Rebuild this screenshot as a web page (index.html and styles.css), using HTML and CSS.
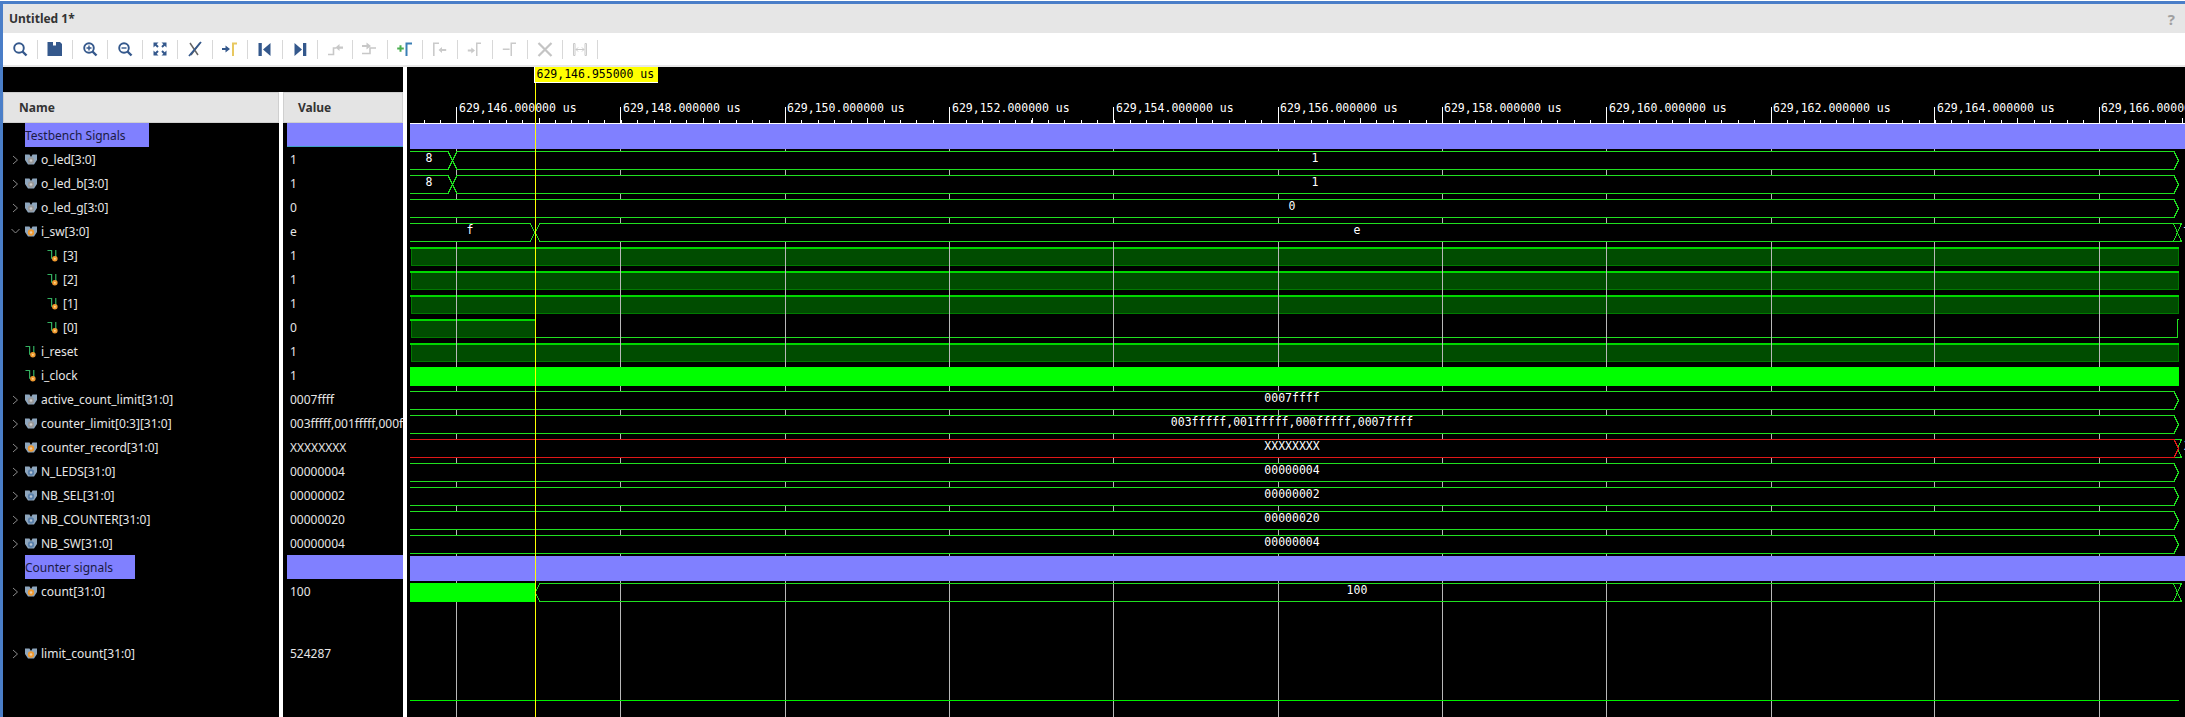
FILE: index.html
```html
<!DOCTYPE html>
<html lang="en">
<head>
    <meta charset="UTF-8">
    <title>Untitled 1*</title>
    <link rel="stylesheet" href="styles.css">
</head>
<body>
<svg class="defs">
    <symbol id="bus-icon" viewBox="0 0 12 12">
        <path d="M0 .5h4.5l1.5 2.5 1.5-2.5H12v5.5l-3 4.5H3L0 6z" fill="#8ea6bd"/>
        <circle cx="6" cy="6.5" r="3.2" fill="currentColor"/>
        <circle cx="6" cy="6.5" r="1.3" fill="#e4e4e4" opacity=".7"/>
    </symbol>
    <symbol id="bit-icon" viewBox="0 0 12 13">
        <path d="M0 .5h4.500v9M9 0v8" fill="none" stroke="#33b060" stroke-width="1.300"/>
        <circle cx="8" cy="9.500" r="3" fill="#f09a30"/>
        <circle cx="8" cy="9.500" r="1" fill="#ffd890"/>
    </symbol>
    <symbol id="right" viewBox="0 0 7 10">
        <path d="M1 1l4.500 4-4.500 4" fill="none" stroke="#8a8a8a"/>
    </symbol>
    <symbol id="down" viewBox="0 0 9 7">
        <path d="M.5 1l4 4 4-4" fill="none" stroke="#8a8a8a"/>
    </symbol>
</svg>

<div class="window">
    <div class="titlebar">
        <span class="title">Untitled 1*</span>
        <span class="help">?</span>
    </div>

    <div class="toolbar">
        <span class="tool"><svg viewBox="0 0 18 18"><circle cx="8" cy="8" r="4.800" fill="none" stroke="#34588c" stroke-width="1.900"/><path d="M11.500 11.500l4 4" stroke="#34588c" stroke-width="2.400"/></svg></span>
        <span class="tool"><svg viewBox="0 0 18 18"><path d="M1.500 2H7V5.500H10V2H14L16 4V16H1.500Z" fill="#34588c"/></svg></span>
        <span class="tool"><svg viewBox="0 0 18 18"><circle cx="8" cy="8" r="4.800" fill="none" stroke="#34588c" stroke-width="1.900"/><path d="M11.500 11.500l4 4" stroke="#34588c" stroke-width="2.400"/><path d="M5.500 8h5M8 5.500v5" stroke="#34588c" stroke-width="1.400"/></svg></span>
        <span class="tool"><svg viewBox="0 0 18 18"><circle cx="8" cy="8" r="4.800" fill="none" stroke="#34588c" stroke-width="1.900"/><path d="M11.500 11.500l4 4" stroke="#34588c" stroke-width="2.400"/><path d="M5.500 8h5" stroke="#34588c" stroke-width="1.400"/></svg></span>
        <span class="tool"><svg viewBox="0 0 18 18" fill="#34588c"><path id="fit-arrow" d="M2.500 2.500h5L5.700 4.300l2 2-1.400 1.400-2-2-1.800 1.800z"/><use href="#fit-arrow" transform="rotate(90 9 9)"/><use href="#fit-arrow" transform="rotate(180 9 9)"/><use href="#fit-arrow" transform="rotate(270 9 9)"/></svg></span>
        <span class="tool"><svg viewBox="0 0 18 18"><path d="M4 3l8 12M5 15L14 3" stroke="#666" stroke-width="1.500"/><path d="M3 16L15 2" stroke="#34588c" stroke-width="1.800"/></svg></span>
        <span class="tool"><svg viewBox="0 0 18 18"><path d="M1 8h3.500V5.500L9 9l-4.500 3.500V10H1z" fill="#34588c"/><path d="M11 2.500H16V4.500H13V16H11Z" fill="#e8c860"/></svg></span>
        <span class="tool"><svg viewBox="0 0 18 18" fill="#34588c"><path d="M2.500 3H5.800V16H2.500ZM14.500 3V16L7 9.500Z"/></svg></span>
        <span class="tool"><svg viewBox="0 0 18 18" fill="#34588c"><path d="M3.500 3V16L11 9.500ZM12 3H15.300V16H12Z"/></svg></span>
        <span class="tool"><svg viewBox="0 0 18 18"><path d="M2 14.500h5.500V8h3" fill="none" stroke="#c8c8c8" stroke-width="1.600"/><path d="M9.500 7.500l4-3.500v2.500H17v2.200h-3.500V11z" fill="#c8c8c8"/></svg></span>
        <span class="tool"><svg viewBox="0 0 18 18"><path d="M1 13.500h8V8h6" fill="none" stroke="#c8c8c8" stroke-width="1.600"/><path d="M1 5h4.500V2.500L10 6l-4.500 3.500V7H1z" fill="#c8c8c8"/></svg></span>
        <span class="tool"><svg viewBox="0 0 18 18"><path d="M1.200 8.500h6.600M4.500 5.200v6.600" stroke="#4caf50" stroke-width="2"/><path d="M9.500 2.500H16V4.500H11.500V16H9.500Z" fill="#3a7fb5"/></svg></span>
        <span class="tool"><svg viewBox="0 0 18 18" fill="#cacaca"><path d="M2 2.500H8V4H3.600V16H2Z"/><path d="M7.500 10l3.500-3v2h4.200v2H11v2z"/></svg></span>
        <span class="tool"><svg viewBox="0 0 18 18" fill="#cacaca"><path d="M1.800 9.500h3.500v-2L9 10.500l-3.700 3v-2H1.800zM10 2.500H15V4H11.500V16H10Z"/></svg></span>
        <span class="tool"><svg viewBox="0 0 18 18" fill="#cacaca"><path d="M1.800 8.500h6.800v1.600H1.800zM9.500 2.500H15V4H11V16H9.500Z"/></svg></span>
        <span class="tool"><svg viewBox="0 0 18 18"><path d="M2.500 3l13 13M15.500 3l-13 13" stroke="#c4c4c4" stroke-width="2.200"/></svg></span>
        <span class="tool"><svg viewBox="0 0 18 18" fill="none" stroke="#cacaca"><path d="M2.500 3.500h1.500v12H2.500zM14 3.500h1.500v12H14zM5 9.500h8M5 9.500l2-2M5 9.500l2 2M13 9.500l-2-2M13 9.500l-2 2"/></svg></span>
    </div>
    <div class="toolbar-edge"></div>

    <div class="viewer">
        <div class="signals">
            <div class="signals-top"></div>
            <div class="columns">
                <div class="col col-name">
                    <div class="col-head">Name</div>
                    <div class="row lvl1"><span class="group-label group-tb">Testbench Signals</span></div>
                    <div class="row"><svg class="arrow"><use href="#right"/></svg><svg class="sig out"><use href="#bus-icon"/></svg>o_led[3:0]</div>
                    <div class="row"><svg class="arrow"><use href="#right"/></svg><svg class="sig out"><use href="#bus-icon"/></svg>o_led_b[3:0]</div>
                    <div class="row"><svg class="arrow"><use href="#right"/></svg><svg class="sig out"><use href="#bus-icon"/></svg>o_led_g[3:0]</div>
                    <div class="row"><svg class="arrow open"><use href="#down"/></svg><svg class="sig in"><use href="#bus-icon"/></svg>i_sw[3:0]</div>
                    <div class="row lvl2"><svg class="sig"><use href="#bit-icon"/></svg>[3]</div>
                    <div class="row lvl2"><svg class="sig"><use href="#bit-icon"/></svg>[2]</div>
                    <div class="row lvl2"><svg class="sig"><use href="#bit-icon"/></svg>[1]</div>
                    <div class="row lvl2"><svg class="sig"><use href="#bit-icon"/></svg>[0]</div>
                    <div class="row lvl1"><svg class="sig"><use href="#bit-icon"/></svg>i_reset</div>
                    <div class="row lvl1"><svg class="sig"><use href="#bit-icon"/></svg>i_clock</div>
                    <div class="row"><svg class="arrow"><use href="#right"/></svg><svg class="sig out"><use href="#bus-icon"/></svg>active_count_limit[31:0]</div>
                    <div class="row"><svg class="arrow"><use href="#right"/></svg><svg class="sig out"><use href="#bus-icon"/></svg>counter_limit[0:3][31:0]</div>
                    <div class="row"><svg class="arrow"><use href="#right"/></svg><svg class="sig in"><use href="#bus-icon"/></svg>counter_record[31:0]</div>
                    <div class="row"><svg class="arrow"><use href="#right"/></svg><svg class="sig const"><use href="#bus-icon"/></svg>N_LEDS[31:0]</div>
                    <div class="row"><svg class="arrow"><use href="#right"/></svg><svg class="sig const"><use href="#bus-icon"/></svg>NB_SEL[31:0]</div>
                    <div class="row"><svg class="arrow"><use href="#right"/></svg><svg class="sig const"><use href="#bus-icon"/></svg>NB_COUNTER[31:0]</div>
                    <div class="row"><svg class="arrow"><use href="#right"/></svg><svg class="sig const"><use href="#bus-icon"/></svg>NB_SW[31:0]</div>
                    <div class="row lvl1"><span class="group-label group-cnt">Counter signals</span></div>
                    <div class="row"><svg class="arrow"><use href="#right"/></svg><svg class="sig in"><use href="#bus-icon"/></svg>count[31:0]</div>
                    <div class="row row-tall"><svg class="arrow"><use href="#right"/></svg><svg class="sig in"><use href="#bus-icon"/></svg>limit_count[31:0]</div>
                </div>
                <div class="col col-value">
                    <div class="col-head">Value</div>
                    <div class="row val-group val-selected"></div>
                    <div class="row">1</div>
                    <div class="row">1</div>
                    <div class="row">0</div>
                    <div class="row">e</div>
                    <div class="row">1</div>
                    <div class="row">1</div>
                    <div class="row">1</div>
                    <div class="row">0</div>
                    <div class="row">1</div>
                    <div class="row">1</div>
                    <div class="row">0007ffff</div>
                    <div class="row">003fffff,001fffff,000fffff,0007ffff</div>
                    <div class="row">XXXXXXXX</div>
                    <div class="row">00000004</div>
                    <div class="row">00000002</div>
                    <div class="row">00000020</div>
                    <div class="row">00000004</div>
                    <div class="row val-group"></div>
                    <div class="row">100</div>
                    <div class="row row-tall">524287</div>
                </div>
            </div>
        </div>

        <div class="pane-gutter"></div>

        <!-- coordinates in this svg are page pixels -->
        <svg class="wave" viewBox="407 67 1778 650">
            <defs>
                <path id="bus" d="M410 .5H2174L2178.500 9.500L2174 18.500H410"/>
                <path id="bus-cross" d="M410 .5H448L457 18.500H2174L2178.500 9.500L2174 .5H457L448 18.500H410"/>
                <path id="hourglass" d="M2173.500 .5H2181.500L2173.500 18.500H2181.500Z"/>
                <g id="high">
                    <rect class="high-fill" x="411" y="1" width="1767" height="17"/>
                    <rect class="high-top" x="410" y="0" width="1769" height="2"/>
                </g>
            </defs>

            <!-- single bit rows sit under the grid -->
            <use href="#high" y="247"/>
            <use href="#high" y="271"/>
            <use href="#high" y="295"/>
            <use href="#high" y="343"/>
            <rect class="high-fill" x="411" y="320" width="124" height="17"/>
            <rect class="high-top" x="410" y="319" width="125" height="2"/>
            <path class="line" d="M535 337.500H2177.500V319.500H2179"/>

            <path class="grid" d="M456.500 123V717M620.500 123V717M785.500 123V717M949.500 123V717M1113.500 123V717M1278.500 123V717M1442.500 123V717M1606.500 123V717M1771.500 123V717M1934.500 123V717M2099.500 123V717"/>

            <rect class="group" x="410" y="124" width="1775" height="25"/>
            <rect class="group" x="410" y="556" width="1775" height="25"/>
            <rect class="clock" x="410" y="367" width="1769" height="19"/>

            <use class="sig-bus" href="#bus-cross" y="151"/>
            <use class="sig-bus" href="#bus-cross" y="175"/>
            <use class="sig-bus" href="#bus" y="199"/>
            <rect class="mask" x="410" y="223" width="1772" height="19"/>
            <path class="line" d="M410 223.500H530L540 241.500H2174M410 241.500H530L540 223.500H2174"/>
            <use class="line" href="#hourglass" y="223"/>
            <use class="sig-bus" href="#bus" y="391"/>
            <use class="sig-bus" href="#bus" y="415"/>
            <rect class="mask" x="410" y="439" width="1772" height="19"/>
            <use class="line" href="#hourglass" y="439"/>
            <use class="sig-bus sig-x" href="#bus" y="439"/>
            <use class="sig-bus" href="#bus" y="463"/>
            <use class="sig-bus" href="#bus" y="487"/>
            <use class="sig-bus" href="#bus" y="511"/>
            <use class="sig-bus" href="#bus" y="535"/>
            <rect class="clock" x="410" y="583" width="125" height="19"/>
            <path class="line" d="M540 583.500L535 592.500L540 601.500H2174M540 583.500H2174"/>
            <use class="line" href="#hourglass" y="583"/>
            <path class="low" d="M410 700.500H2179"/>

            <text class="mid" x="429" y="162">8</text>
            <text class="mid" x="1315" y="162">1</text>
            <text class="mid" x="429" y="186">8</text>
            <text class="mid" x="1315" y="186">1</text>
            <text class="mid" x="1292" y="210">0</text>
            <text class="mid" x="470" y="234">f</text>
            <text class="mid" x="1357" y="234">e</text>
            <text x="2183" y="234">f</text>
            <text class="mid" x="1292" y="402">0007ffff</text>
            <text class="mid" x="1292" y="426">003fffff,001fffff,000fffff,0007ffff</text>
            <text class="mid" x="1292" y="450">XXXXXXXX</text>
            <text x="2184" y="450">X</text>
            <text class="mid" x="1292" y="474">00000004</text>
            <text class="mid" x="1292" y="498">00000002</text>
            <text class="mid" x="1292" y="522">00000020</text>
            <text class="mid" x="1292" y="546">00000004</text>
            <text class="mid" x="1357" y="594">100</text>

            <!-- time axis -->
            <path class="axis" d="M410 123.500H2185"/>
            <line class="tick-minor" x1="423.500" y1="121.500" x2="2185" y2="121.500"/>
            <line class="tick-half" x1="538.600" y1="120.500" x2="2185" y2="120.500"/>
            <path class="axis" d="M456.500 107V123M620.500 107V123M785.500 107V123M949.500 107V123M1113.500 107V123M1278.500 107V123M1442.500 107V123M1606.500 107V123M1771.500 107V123M1934.500 107V123M2099.500 107V123"/>
            <text x="459" y="112">629,146.000000 us</text>
            <text x="623" y="112">629,148.000000 us</text>
            <text x="787" y="112">629,150.000000 us</text>
            <text x="952" y="112">629,152.000000 us</text>
            <text x="1116" y="112">629,154.000000 us</text>
            <text x="1280" y="112">629,156.000000 us</text>
            <text x="1444" y="112">629,158.000000 us</text>
            <text x="1609" y="112">629,160.000000 us</text>
            <text x="1773" y="112">629,162.000000 us</text>
            <text x="1937" y="112">629,164.000000 us</text>
            <text x="2101" y="112">629,166.000000 us</text>

            <!-- cursor -->
            <path class="cursor" d="M535.500 83V717"/>
            <rect class="cursor-edge" x="534" y="67" width="124" height="16"/>
            <rect class="cursor-box" x="535" y="67" width="123" height="15"/>
            <text class="cursor-text" x="536.500" y="77.500">629,146.955000 us</text>
        </svg>
    </div>
</div>
</body>
</html>
```

FILE: styles.css
```css
html, body{
    margin: 0;
    height: 100%;
    overflow: hidden;
    background-color: white;
}
.defs{
    display: none;
}
.window{
    margin-top: 1px;
    height: 716px;
    box-sizing: border-box;
    border-top: 3px solid #4a7ec8;
    border-left: 3px solid #4a7ec8;
    font-family: "Noto Sans", sans-serif;
    font-size: 12px;
}

/* title + toolbar */
.titlebar{
    height: 29px;
    padding: 0 10px 0 6px;
    display: flex;
    align-items: center;
    justify-content: space-between;
    background-color: #e6e6e6;
}
.title{
    font-weight: 700;
    color: #333;
}
.help{
    font-size: 15px;
    font-weight: 700;
    color: #a0a0a0;
}
.toolbar{
    height: 32px;
    display: flex;
    align-items: center;
    background-color: white;
}
.tool{
    width: 34px;
    height: 19px;
    border-right: 1px solid #d8d8d8;
    display: flex;
    justify-content: center;
    align-items: center;
}
.tool svg{
    width: 18px;
    height: 18px;
    overflow: visible;
}
.toolbar-edge{
    height: 2px;
    background-color: #e8e8e8;
}

/* signal list */
.viewer{
    height: 650px;
    display: flex;
    background-color: black;
}
.signals{
    width: 400px;
}
.signals-top{
    height: 25px;
}
.columns{
    height: 625px;
    display: flex;
    gap: 4px;
    background-color: white;
}
.col{
    background-color: black;
    overflow: hidden;
    color: #e6e6e6;
}
.col-name{
    width: 276px;
}
.col-value{
    width: 120px;
}
.col-head{
    height: 31px;
    box-sizing: border-box;
    padding-left: 15px;
    display: flex;
    align-items: center;
    font-weight: 700;
    color: #333;
    background-color: #e4e4e4;
    border: 1px solid #cfcfcf;
}
.row{
    height: 24px;
    padding-left: 9px;
    padding-top: 1px;
    box-sizing: border-box;
    display: flex;
    align-items: center;
    white-space: nowrap;
}
.col-value .row{
    padding-left: 7px;
}
.col-value .col-head{
    padding-left: 14px;
}
.lvl1{
    padding-left: 22px;
}
.lvl2{
    padding-left: 44px;
}
.row-tall{
    margin-top: 38px;
}
.arrow{
    width: 7px;
    height: 10px;
    margin-right: 6px;
}
.arrow.open{
    width: 9px;
    height: 7px;
    margin-left: -1px;
    margin-right: 5px;
}
.sig{
    width: 12px;
    height: 12px;
    margin-right: 4px;
    flex-shrink: 0;
}
.sig.out{
    color: #9a9a9a;
}
.sig.in{
    color: #f09a30;
}
.sig.const{
    color: #5a80aa;
}
.group-label{
    height: 24px;
    margin-top: -1px;
    display: flex;
    align-items: center;
    color: #1a1a44;
    background-color: #8080ff;
}
.group-tb{
    width: 124px;
}
.group-cnt{
    width: 110px;
}
.col-value .val-group{
    margin-left: 4px;
    background-color: #8080ff;
}
.val-selected{
    border-bottom: 1px solid #3f9fc4;
}
.pane-gutter{
    width: 4px;
    background-color: white;
}

/* waveform */
.wave{
    display: block;
    width: 1778px;
    height: 650px;
    shape-rendering: crispEdges;
    font-family: "DejaVu Sans Mono", monospace;
    font-size: 11.5px;
    fill: white;
}
.mid{
    text-anchor: middle;
}
.sig-bus{
    fill: black;
    stroke: #20e020;
}
.sig-x{
    stroke: #e01818;
}
.line{
    fill: none;
    stroke: #20e020;
}
.low{
    fill: none;
    stroke: #00f000;
}
.mask{
    fill: black;
}
.high-fill{
    fill: #004c00;
    stroke: #007a00;
}
.high-top{
    fill: #00d800;
}
.clock{
    fill: #00ff00;
}
.group{
    fill: #8080ff;
}
.grid{
    fill: none;
    stroke: #b8b8b8;
}
.axis{
    fill: none;
    stroke: white;
}
.tick-minor{
    stroke: white;
    stroke-width: 3;
    stroke-dasharray: 1 15.43;
}
.tick-half{
    stroke: white;
    stroke-width: 5;
    stroke-dasharray: 1 163.3;
}
.cursor{
    fill: none;
    stroke: #ffff00;
}
.cursor-edge{
    fill: white;
}
.cursor-box{
    fill: #ffff00;
}
.cursor-text{
    fill: black;
}
```
